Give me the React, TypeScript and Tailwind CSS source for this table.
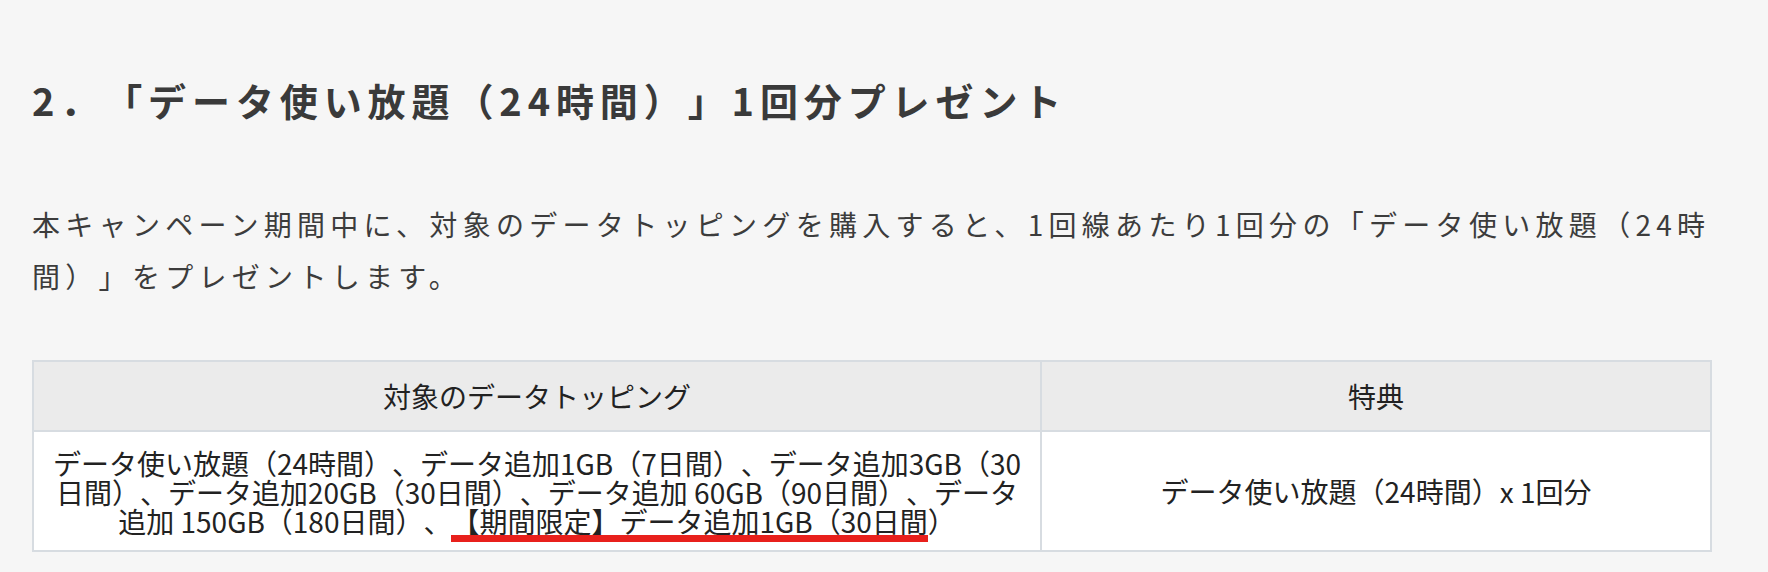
const font = { fontFamily: '"Noto Sans CJK JP", "Noto Sans", sans-serif' };

export default function App() {
  return (
    <div
      className="min-h-[572px] w-[1768px] bg-[#f6f6f6] text-[#3c3c3c] [text-spacing-trim:space-all]"
      style={font}
    >
      <div className="w-[1712px] pl-[32px] pt-[73px]">
        <h2 className="text-[38px] font-bold leading-[54px] tracking-[5.9px] text-[#3a3a3a]">
          2．「データ使い放題（24時間）」1回分プレゼント
        </h2>

        <p className="mt-[71px] w-[1700px] text-[28px] leading-[52px] tracking-[5.3px]">
          本キャンペーン期間中に、対象のデータトッピングを購入すると、1回線あたり1回分の「データ使い放題（24時間）」をプレゼントします。
        </p>

        <table className="mt-[58px] w-full border-collapse border-2 border-[#d7dce1] text-[28px] text-[#222]">
          <thead>
            <tr className="bg-[#ebebeb]">
              <th className="h-[70px] w-[1008px] border-2 border-[#d7dce1] font-normal">対象のデータトッピング</th>
              <th className="h-[70px] border-2 border-[#d7dce1] font-normal">特典</th>
            </tr>
          </thead>
          <tbody>
            <tr className="bg-white">
              <td className="border-2 border-[#d7dce1] px-[18px] pb-[14px] pt-[17px] text-center align-middle leading-[29px]">
                データ使い放題（24時間）、データ追加1GB（7日間）、データ追加3GB（30日間）、データ追加20GB（30日間）、データ追加 60GB（90日間）、データ追加 150GB（180日間）、
                <span className="relative underline decoration-[#222] underline-offset-[3px]">
                  【期間限定】データ追加1GB（30日間
                  <span className="absolute bottom-[-1px] left-0 right-0 h-[7px] bg-[#e8201c]" />
                </span>
                ）
              </td>
              <td className="border-2 border-[#d7dce1] text-center align-middle leading-[29px]">
                データ使い放題（24時間）x 1回分
              </td>
            </tr>
          </tbody>
        </table>
      </div>
    </div>
  );
}
